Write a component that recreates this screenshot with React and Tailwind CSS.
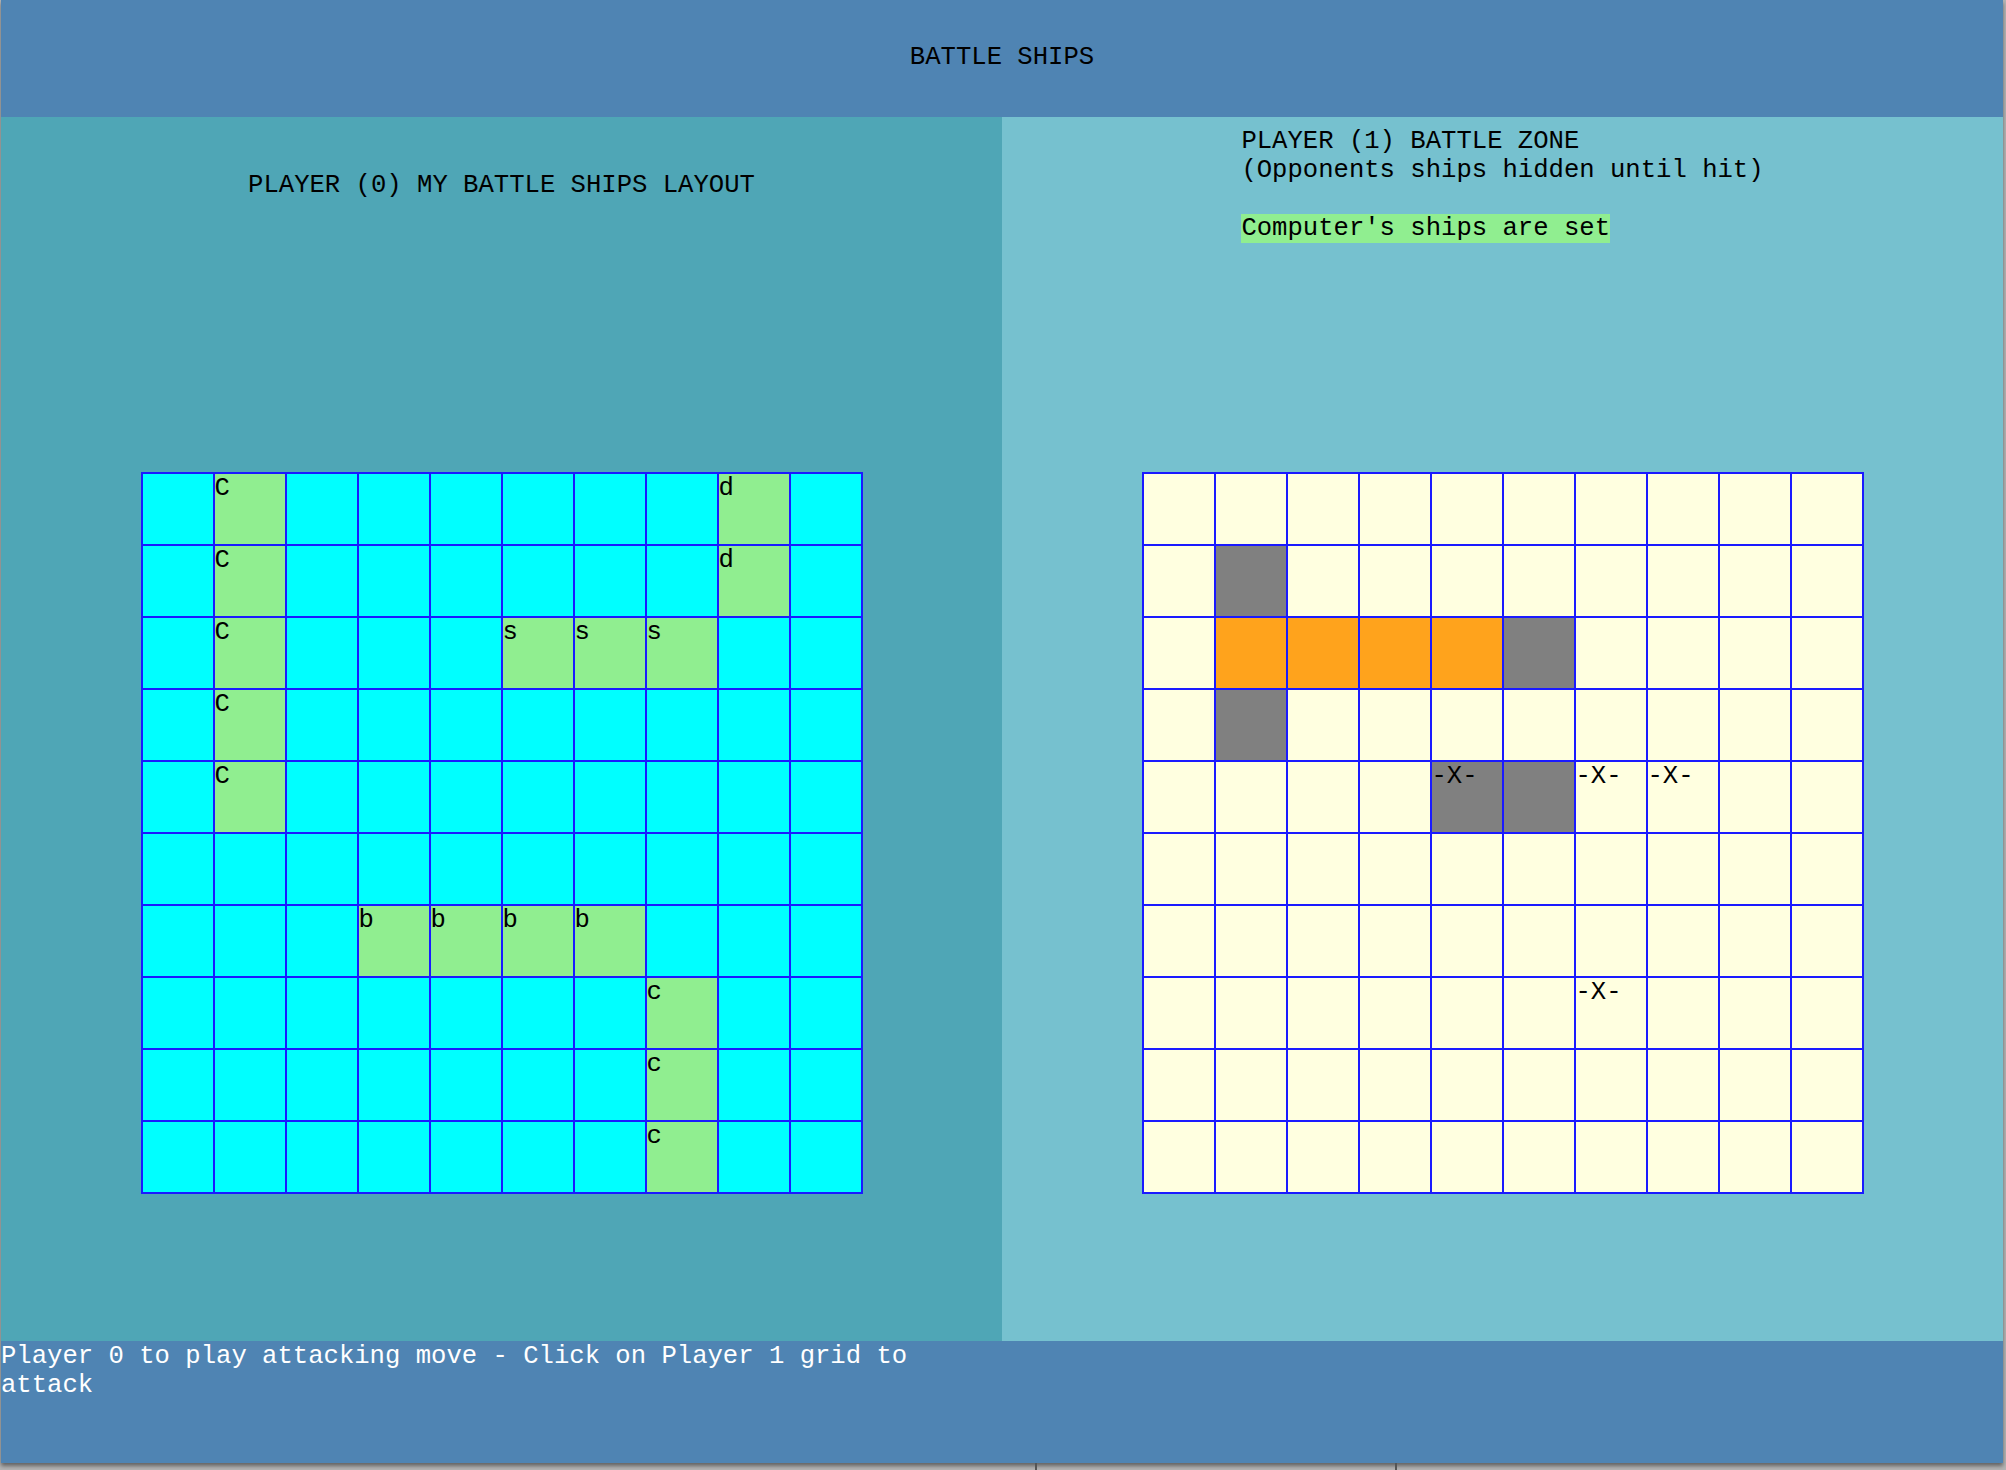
import React from "react";

const LEFT = [
  ["", "C", "", "", "", "", "", "", "d", ""],
  ["", "C", "", "", "", "", "", "", "d", ""],
  ["", "C", "", "", "", "s", "s", "s", "", ""],
  ["", "C", "", "", "", "", "", "", "", ""],
  ["", "C", "", "", "", "", "", "", "", ""],
  ["", "", "", "", "", "", "", "", "", ""],
  ["", "", "", "b", "b", "b", "b", "", "", ""],
  ["", "", "", "", "", "", "", "c", "", ""],
  ["", "", "", "", "", "", "", "c", "", ""],
  ["", "", "", "", "", "", "", "c", "", ""],
];

const RIGHT = {
  "1-1": "g",
  "2-1": "o",
  "2-2": "o",
  "2-3": "o",
  "2-4": "o",
  "2-5": "g",
  "3-1": "g",
  "4-4": "gx",
  "4-5": "g",
  "4-6": "x",
  "4-7": "x",
  "7-6": "x",
};

function LeftGrid() {
  return (
    <div className="mx-auto -mt-px grid w-fit grid-cols-[repeat(10,70px)] gap-[2px] bg-[#1a1aff] p-[2px]">
      {LEFT.flatMap((row, r) =>
        row.map((v, c) => (
          <div
            key={`${r}-${c}`}
            className={`h-[70px] pl-[0px] text-black ${v ? "bg-[#90ee90]" : "bg-[#00ffff]"}`}
          >
            {v}
          </div>
        ))
      )}
    </div>
  );
}

function RightGrid() {
  const cells = [];
  for (let r = 0; r < 10; r++) {
    for (let c = 0; c < 10; c++) {
      const v = RIGHT[`${r}-${c}`];
      let bg = "bg-[#ffffe0]";
      if (v === "g" || v === "gx") bg = "bg-[#808080]";
      if (v === "o") bg = "bg-[#ffa31c]";
      cells.push(
        <div key={`${r}-${c}`} className={`h-[70px] pl-[0px] text-black ${bg}`}>
          {v === "x" || v === "gx" ? "-X-" : ""}
        </div>
      );
    }
  }
  return (
    <div className="mx-auto -mt-px grid w-fit grid-cols-[repeat(10,70px)] gap-[2px] bg-[#1a1aff] p-[2px]">
      {cells}
    </div>
  );
}

export default function App() {
  return (
    <div className="relative h-[1470px] w-[2006px] overflow-hidden bg-[#b4b4b4] font-['Liberation_Mono',monospace] text-[25.6px] leading-[29px]">
      <div className="ml-px flex h-[1463px] w-[2002px] flex-col shadow-[0_3px_4px_rgba(0,0,0,0.45)]">
        <header className="flex h-[117px] shrink-0 justify-center bg-[#4f84b3] pt-[43px] text-black">
          BATTLE SHIPS
        </header>
        <main className="grid h-[1224px] shrink-0 grid-cols-2">
          <section className="flex flex-col bg-[#4fa6b6]">
            <div className="h-[356px] pt-[54px] text-center text-black">
              PLAYER (0) MY BATTLE SHIPS LAYOUT
            </div>
            <LeftGrid />
          </section>
          <section className="flex flex-col bg-[#76c1cf]">
            <div className="flex h-[356px] justify-center pt-[10px] text-black">
              <div className="text-left">
                <div>PLAYER (1) BATTLE ZONE</div>
                <div>(Opponents ships hidden until hit)</div>
                <div className="h-[29px]" />
                <div>
                  <span className="bg-[#90ee90]">Computer's ships are set</span>
                </div>
              </div>
            </div>
            <RightGrid />
          </section>
        </main>
        <footer className="h-[122px] shrink-0 bg-[#4f84b3] pt-[1px] text-white">
          <div className="w-[1001px]">
            Player 0 to play attacking move - Click on Player 1 grid to attack
          </div>
        </footer>
      </div>
      <div className="absolute left-[1035px] top-[1463px] h-[7px] w-[2px] bg-[#555]" />
      <div className="absolute left-[1395px] top-[1463px] h-[7px] w-[2px] bg-[#555]" />
    </div>
  );
}
